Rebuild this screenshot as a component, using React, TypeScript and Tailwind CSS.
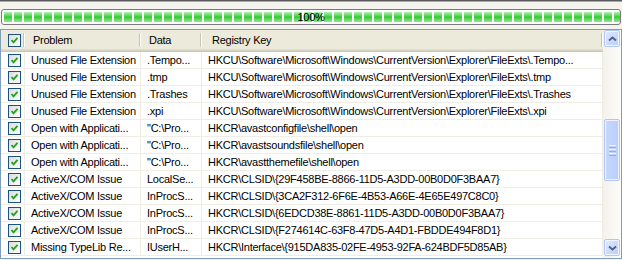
import React from "react";

const rows = [
  ["Unused File Extension", ".Tempo...", "HKCU\\Software\\Microsoft\\Windows\\CurrentVersion\\Explorer\\FileExts\\.Tempo..."],
  ["Unused File Extension", ".tmp", "HKCU\\Software\\Microsoft\\Windows\\CurrentVersion\\Explorer\\FileExts\\.tmp"],
  ["Unused File Extension", ".Trashes", "HKCU\\Software\\Microsoft\\Windows\\CurrentVersion\\Explorer\\FileExts\\.Trashes"],
  ["Unused File Extension", ".xpi", "HKCU\\Software\\Microsoft\\Windows\\CurrentVersion\\Explorer\\FileExts\\.xpi"],
  ["Open with Applicati...", "\"C:\\Pro...", "HKCR\\avastconfigfile\\shell\\open"],
  ["Open with Applicati...", "\"C:\\Pro...", "HKCR\\avastsoundsfile\\shell\\open"],
  ["Open with Applicati...", "\"C:\\Pro...", "HKCR\\avastthemefile\\shell\\open"],
  ["ActiveX/COM Issue", "LocalSe...", "HKCR\\CLSID\\{29F458BE-8866-11D5-A3DD-00B0D0F3BAA7}"],
  ["ActiveX/COM Issue", "InProcS...", "HKCR\\CLSID\\{3CA2F312-6F6E-4B53-A66E-4E65E497C8C0}"],
  ["ActiveX/COM Issue", "InProcS...", "HKCR\\CLSID\\{6EDCD38E-8861-11D5-A3DD-00B0D0F3BAA7}"],
  ["ActiveX/COM Issue", "InProcS...", "HKCR\\CLSID\\{F274614C-63F8-47D5-A4D1-FBDDE494F8D1}"],
  ["Missing TypeLib Re...", "IUserH...", "HKCR\\Interface\\{915DA835-02FE-4953-92FA-624BDF5D85AB}"],
];

function CheckBox() {
  return (
    <div className="flex h-[13px] w-[13px] items-center justify-center border border-[#1c5180] bg-gradient-to-br from-[#dcdcd7] to-white">
      <svg width="9" height="9" viewBox="0 0 9 9">
        <path d="M1.5 4 L3.5 6.3 L7.5 1.8" stroke="#21a121" strokeWidth="1.8" fill="none" />
      </svg>
    </div>
  );
}

function ScrollButton({ down }: { down?: boolean }) {
  return (
    <div className="mx-[1px] flex h-[17px] items-center justify-center rounded-[2px] border border-[#b4c7f2] bg-gradient-to-br from-[#e1eaff] to-[#b9cdfa] shadow-[inset_0_0_0_1px_#f2f6ff]">
      <svg width="9" height="6" viewBox="0 0 9 6">
        <path d={down ? "M1 1.5 L4.5 4.5 L8 1.5" : "M1 4.5 L4.5 1.5 L8 4.5"} stroke="#4d6185" strokeWidth="1.8" fill="none" />
      </svg>
    </div>
  );
}

export default function App() {
  const segments = Array.from({ length: 62 });

  return (
    <div className="h-[260px] w-[622px] overflow-hidden bg-[#f4f3ee] font-['Liberation_Sans',Arial,sans-serif] text-[11px] tracking-[-0.25px] text-black">
      <div className="h-[2px] border-t border-[#5a5a5a] bg-[#a8a8a8]" />

      {/* progress */}
      <div className="px-[1px] pt-[7px]">
        <div className="relative h-[16px] overflow-hidden rounded-[3px] border border-[#7a7a7a] bg-white p-[2px]">
          <div className="flex h-full gap-[2px]">
            {segments.map((_, i) => (
              <div key={i} className="h-full w-[8px] shrink-0 bg-gradient-to-b from-[#aef0ae] via-[#2fcb2f] to-[#8ee88e]" />
            ))}
          </div>
          <div className="absolute inset-0 flex items-center justify-center leading-none">100%</div>
        </div>
      </div>

      {/* list */}
      <div className="mt-[4px] flex h-[230px] border border-[#7f9db9] bg-white">
        <div className="flex-1 overflow-hidden">
          <div className="grid h-[22px] grid-cols-[24px_116px_61px_1fr] bg-[#ebeadb] shadow-[inset_0_-1px_#cbc7b8,inset_0_-2px_#d6d2c2,inset_0_-3px_#e2decd]">
            <div className="flex items-center justify-between pb-[2px] pl-[7px]">
              <CheckBox />
              <div className="h-[14px] w-[2px] border-l border-r border-l-[#c7c5b2] border-r-white" />
            </div>
            <div className="flex items-center justify-between pb-[2px] pl-[8px]">
              <span>Problem</span>
              <div className="h-[14px] w-[2px] border-l border-r border-l-[#c7c5b2] border-r-white" />
            </div>
            <div className="flex items-center justify-between pb-[2px] pl-[8px]">
              <span>Data</span>
              <div className="h-[14px] w-[2px] border-l border-r border-l-[#c7c5b2] border-r-white" />
            </div>
            <div className="flex items-center justify-between pb-[2px] pl-[10px]">
              <span>Registry Key</span>
              <div className="h-[14px] w-[2px] border-l border-r border-l-[#c7c5b2] border-r-white" />
            </div>
          </div>

          {rows.map(([problem, data, key], i) => (
            <div key={i} className="grid h-[17px] grid-cols-[24px_116px_61px_1fr] border-b border-[#efede4]">
              <div className="flex items-center border-r border-[#efede4] pl-[7px]">
                <CheckBox />
              </div>
              <div className="flex items-center overflow-hidden whitespace-nowrap border-r border-[#efede4] pl-[6px]">{problem}</div>
              <div className="flex items-center overflow-hidden whitespace-nowrap border-r border-[#efede4] pl-[6px]">{data}</div>
              <div className="flex items-center overflow-hidden whitespace-nowrap border-r border-[#efede4] pl-[6px]">{key}</div>
            </div>
          ))}
        </div>

        {/* scrollbar */}
        <div className="flex w-[18px] flex-col bg-gradient-to-r from-[#f3f1ec] to-[#fdfdfa]">
          <ScrollButton />
          <div className="mx-[1px] mt-[72px] flex h-[62px] flex-col items-center justify-center gap-[1px] rounded-[2px] border border-[#b4c7f2] bg-gradient-to-r from-[#c8d8fd] to-[#b9cdfa] shadow-[inset_0_0_0_1px_#eef3ff]">
            <div className="h-[1px] w-[7px] bg-[#eef4fe]" />
            <div className="h-[1px] w-[7px] bg-[#8cb0f8]" />
            <div className="h-[1px] w-[7px] bg-[#eef4fe]" />
            <div className="h-[1px] w-[7px] bg-[#8cb0f8]" />
            <div className="h-[1px] w-[7px] bg-[#eef4fe]" />
            <div className="h-[1px] w-[7px] bg-[#8cb0f8]" />
          </div>
          <div className="mt-[58px]">
            <ScrollButton down />
          </div>
        </div>
      </div>
    </div>
  );
}
